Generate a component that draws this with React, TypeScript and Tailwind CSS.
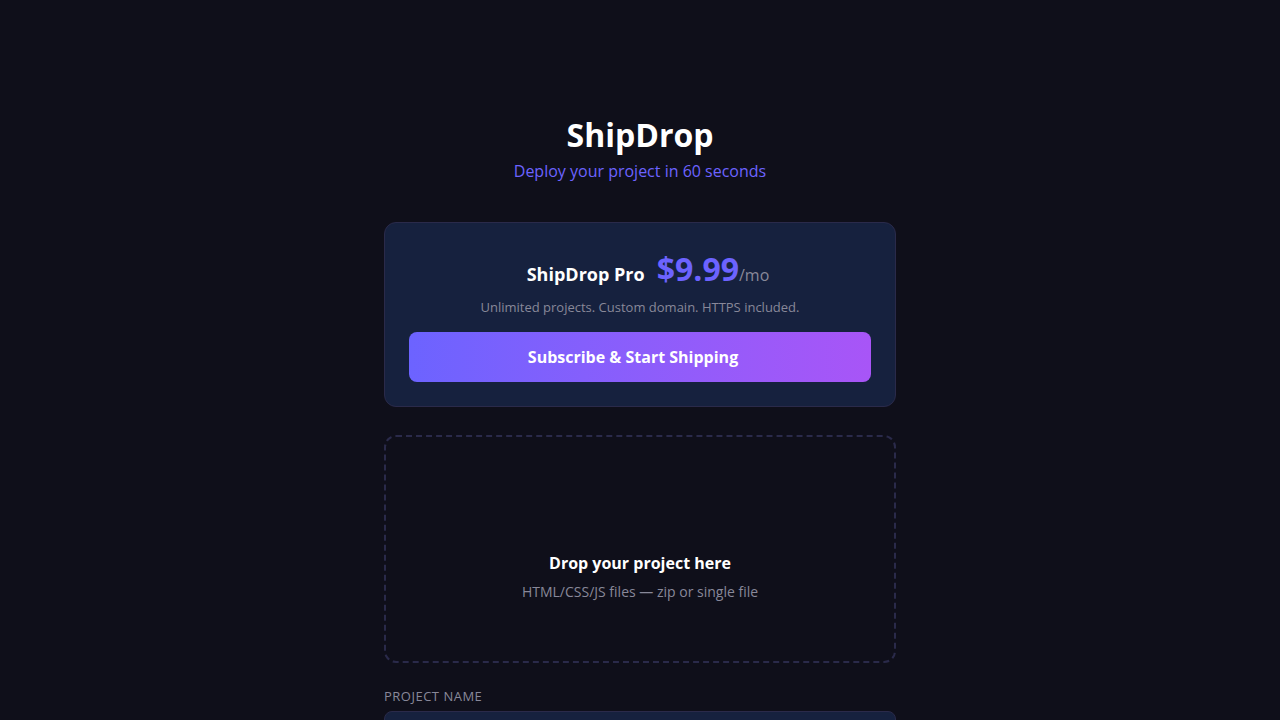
import React from "react";

const App: React.FC = () => {
  return (
    <div
      className="min-h-screen bg-[#0f0f1a] text-white"
      style={{ fontFamily: '"Open Sans", "Noto Sans", sans-serif' }}
    >
      <div className="mx-auto w-[512px] pt-[114px] pb-16">
        <header className="text-center">
          <h1 className="text-[32px] font-bold leading-[42px]">ShipDrop</h1>
          <p className="mt-[3px] text-base leading-6 text-[#6c63ff]">Deploy your project in 60 seconds</p>
        </header>

        {/* pricing card */}
        <section className="mt-[39px] rounded-xl border border-[#2a2a4a] bg-[#16213e] px-6 pt-[26px] pb-6 text-center">
          <div className="flex items-baseline justify-center pl-4">
            <span className="text-lg font-bold">ShipDrop Pro</span>
            <span className="ml-3 text-[32px] font-bold leading-[40px] text-[#6c63ff]">$9.99</span>
            <span className="text-base text-[#888899]">/mo</span>
          </div>
          <p className="mt-2 text-[13px] leading-5 text-[#888899]">
            Unlimited projects. Custom domain. HTTPS included.
          </p>
          <button className="mt-[15px] h-[50px] w-full rounded-lg bg-gradient-to-r from-[#6c63ff] to-[#a855f7] pr-[14px] text-base font-bold text-white">
            Subscribe &amp; Start Shipping
          </button>
        </section>

        {/* drop zone */}
        <section className="mt-7 flex h-[228px] flex-col items-center justify-end rounded-xl border-2 border-dashed border-[#2a2a4a] pb-[59px] text-center">
          <p className="text-base font-bold leading-6">Drop your project here</p>
          <p className="mt-[7px] text-sm leading-5 text-[#888899]">HTML/CSS/JS files — zip or single file</p>
        </section>

        <label className="mt-[23px] block text-[13px] uppercase tracking-[0.5px] leading-5 text-[#888899]">
          Project name
        </label>
        <input
          className="mt-[5px] block h-12 w-full rounded-lg border border-[#2a2a4a] bg-[#16213e] px-4 text-white outline-none"
          type="text"
        />
      </div>
    </div>
  );
};

export default App;
